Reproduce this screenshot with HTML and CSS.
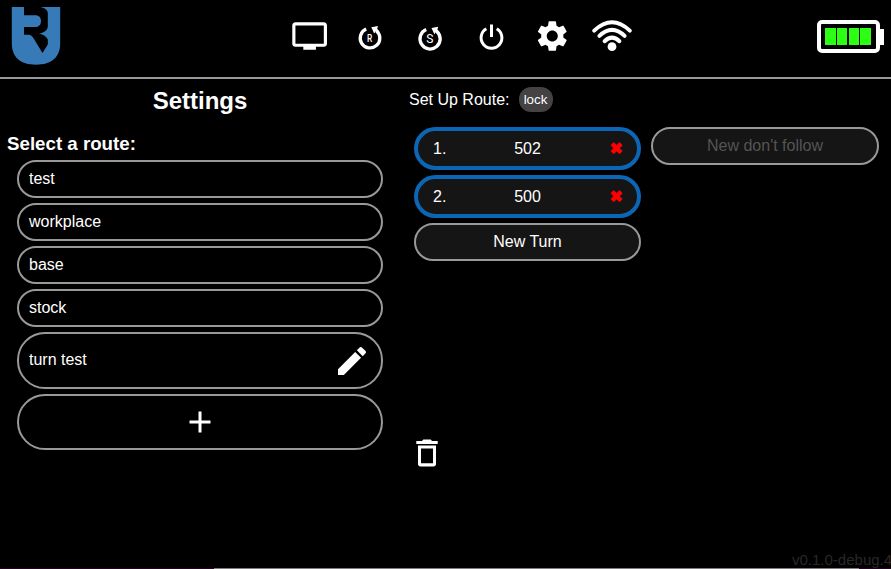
FILE: index.html
```html
<!DOCTYPE html>
<html lang="en">
<head>
<meta charset="utf-8">
<title>Settings</title>
<link rel="stylesheet" href="styles.css">
</head>
<body>
<header class="topbar">
  <svg class="logo" viewBox="0 0 50 58" width="50" height="58">
    <path fill="#367ab8" d="M.8 0H13V8.200H24.500C28 8.200 30 10.500 30 14S28 20 24.500 20H13V27.700H17.500C20 27.700 21.500 29.500 23 32L31.500 46L36.800 37.500V32.500C35.500 30 32.500 27.500 28 26.600C32.500 26 36.800 23 36.800 19.500V6C36.800 3 33 .5 29 0H49.200V36C49.200 50 41 57.700 25 57.700S.8 50 .8 36Z"/>
  </svg>
  <nav class="icons">
    <svg viewBox="0 0 60 77"><g transform="translate(10.700 17.800) scale(1.577 1.520)"><path d="M21 3H3c-1.100 0-2 .9-2 2v12c0 1.100.9 2 2 2h5v2h8v-2h5c1.100 0 2-.9 2-2V5c0-1.100-.9-2-2-2zm0 14H3V5h18v12z"/></g></svg>
    <svg viewBox="0 0 60 77"><path class="ring" d="M26.200 29.100A9.800 9.800 0 1 0 36.400 30.700"/><path d="M31.300 27.300L38 26L37.200 28.700L39.300 31.500L37 33L35.800 31.300L34.200 33.600Z"/><text class="letter" transform="translate(29.700 42) scale(.8 1)">R</text></svg>
    <svg viewBox="0 0 60 77"><path class="ring" d="M26.200 29.600A10.100 10.100 0 1 0 36.600 31.200"/><path d="M31.500 28L38.200 26.700L37.400 29.400L39.500 32.200L37.200 33.700L36 32L34.400 34.300Z"/><text class="letter letter-s" x="29.800" y="43.200">S</text></svg>
    <svg viewBox="0 0 60 77"><path class="power" d="M26.300 28.800A10.400 10.400 0 1 0 36.700 28.800M31.500 24.500V37"/></svg>
    <svg viewBox="0 0 60 77"><g transform="translate(13.800 17.500) scale(1.540)"><path d="M19.140 12.940c.04-.3.060-.61.060-.94 0-.32-.02-.64-.07-.94l2.030-1.580c.18-.14.230-.41.120-.61l-1.920-3.320c-.12-.22-.37-.29-.59-.22l-2.390.96c-.5-.38-1.030-.7-1.620-.94l-.36-2.540c-.04-.24-.24-.41-.48-.41h-3.840c-.24 0-.43.170-.47.410l-.36 2.540c-.59.240-1.130.570-1.620.940l-2.390-.96c-.22-.08-.47 0-.59.220L2.740 8.870c-.12.210-.08.470.12.610l2.030 1.580c-.05.3-.09.630-.09.940s.02.640.07.940l-2.030 1.580c-.18.140-.23.410-.12.610l1.920 3.320c.12.220.37.290.59.220l2.390-.96c.5.380 1.030.7 1.620.94l.36 2.540c.05.240.24.410.48.410h3.840c.24 0 .44-.17.470-.41l.36-2.540c.59-.24 1.130-.56 1.620-.94l2.390.96c.22.080.47 0 .59-.22l1.920-3.320c.12-.22.070-.47-.12-.61l-2.010-1.580zM12 15.600c-1.980 0-3.600-1.620-3.600-3.600s1.620-3.600 3.600-3.600 3.600 1.620 3.600 3.600-1.620 3.600-3.600 3.600z"/></g></svg>
    <svg viewBox="0 0 60 77"><path class="wave" d="M14.200 30.600Q32 13.900 49.800 30.600M19.400 35.900Q32 23.800 44.600 35.900M24.600 41.200Q32 34.200 39.400 41.200"/><circle cx="32" cy="46.700" r="4.400"/></svg>
  </nav>
  <div class="battery">
    <div class="cells"><i></i><i></i><i></i><i></i></div>
    <div class="terminal"></div>
  </div>
</header>
<main class="content">
  <section class="routes">
    <h1>Settings</h1>
    <h2>Select a route:</h2>
    <ul class="route-list">
      <li class="pill">test</li>
      <li class="pill">workplace</li>
      <li class="pill">base</li>
      <li class="pill">stock</li>
      <li class="pill selected"><span>turn test</span>
        <svg viewBox="3 3 18 18" width="28" height="28"><path d="M3 17.250V21h3.750L17.810 9.940l-3.750-3.750L3 17.250zM20.710 7.040c.39-.39.390-1.020 0-1.410l-2.340-2.340c-.39-.39-1.020-.39-1.410 0l-1.830 1.830 3.750 3.750 1.830-1.830z"/></svg>
      </li>
      <li class="pill add"><svg viewBox="0 0 22 22" width="22" height="22"><path d="M9.500 .5h3v9h9v3h-9v9h-3v-9h-9v-3h9z"/></svg></li>
    </ul>
  </section>
  <section class="setup">
    <div class="setup-head">Set Up Route: <span class="lock">lock</span></div>
    <div class="columns">
      <div class="turns">
        <div class="turn"><span>1.</span><span class="code">502</span><span class="remove">✖</span></div>
        <div class="turn"><span>2.</span><span class="code">500</span><span class="remove">✖</span></div>
        <div class="new">New Turn</div>
      </div>
      <div class="new disabled">New don't follow</div>
    </div>
    <svg class="trash" viewBox="0 0 22 28" width="22" height="28"><path fill-rule="evenodd" d="M.3 2H6L7.300 .5H14.700L16 2H21.700V5H.3ZM2 6.500H20V25C20 26.600 19 27.500 17.500 27.500H4.500C3 27.500 2 26.600 2 25ZM5 9.500V24.300H17V9.500Z"/></svg>
  </section>
</main>
<footer class="footer">
  <div class="version">v0.1.0-debug.4</div>
  <div class="edge"></div>
</footer>
</body>
</html>
```
FILE: styles.css
```css
* {
  box-sizing: border-box;
}

body {
  margin: 0;
  height: 569px;
  overflow: hidden;
  display: flex;
  flex-direction: column;
  background: #000;
  color: #fff;
  font: 16px/18px "Liberation Sans", Arial, sans-serif;
}

svg {
  display: block;
  fill: #fff;
}

.topbar {
  height: 79px;
  flex: none;
  display: flex;
  align-items: flex-start;
  border-bottom: 2px solid #999;
}

.logo {
  margin: 7px 0 0 11px;
}

.icons {
  display: flex;
  margin-left: 219px;
}

.icons svg {
  width: 60px;
  height: 77px;
}

.ring,
.power,
.wave {
  fill: none;
  stroke: #fff;
  stroke-width: 3;
}

.ring {
  stroke-width: 3.300;
}

.wave {
  stroke-width: 4;
  stroke-linecap: round;
}

.letter {
  font: 500 10.500px Roboto, sans-serif;
  text-anchor: middle;
}

.letter-s {
  font: 12px Roboto, sans-serif;
}

.battery {
  display: flex;
  align-items: center;
  margin: 20px 0 0 177px;
}

.cells {
  display: flex;
  gap: 1.300px;
  width: 63px;
  height: 33px;
  padding: 4px 5.200px 4px 4.300px;
  border: 4px solid #fff;
  border-radius: 5px;
}

.cells i {
  flex: 1;
  background: #2cff14;
}

.terminal {
  width: 4px;
  height: 16px;
  background: #fff;
}

.content {
  flex: 1;
  display: flex;
}

.routes {
  width: 400px;
  padding: 8px 17px 0;
}

h1 {
  margin: 0;
  font-size: 24px;
  line-height: 28px;
  text-align: center;
}

h2 {
  margin: 18px 0 6px -10px;
  font-size: 18.720px;
  line-height: 21px;
}

.route-list {
  margin: 0;
  padding: 0;
  list-style: none;
  display: flex;
  flex-direction: column;
  gap: 5px;
}

.pill {
  display: flex;
  align-items: center;
  height: 38px;
  padding: 0 10px 1px;
  border: 2px solid #999;
  border-radius: 28px;
}

.selected {
  height: 57px;
  justify-content: space-between;
  padding-right: 14.600px;
}

.selected span {
  margin-bottom: 1px;
}

.selected svg {
  margin-top: 1px;
}

.add {
  height: 56px;
  justify-content: center;
  padding-bottom: 0;
}

.setup {
  padding: 8px 0 0 9px;
}

.setup-head {
  display: flex;
  align-items: center;
  height: 25px;
}

.lock {
  margin-left: 9px;
  width: 34px;
  height: 25px;
  border-radius: 12px;
  background: #444243;
  font-size: 13.333px;
  line-height: 25px;
  text-align: center;
}

.columns {
  display: flex;
  align-items: flex-start;
  gap: 10px;
  margin: 15px 0 0 5px;
}

.turns {
  display: flex;
  flex-direction: column;
  gap: 5px;
  width: 227px;
}

.turn {
  display: grid;
  grid-template-columns: 30px 1fr 30px;
  align-items: center;
  height: 43px;
  padding: 0 15px;
  border: 4px solid #0b67b6;
  border-radius: 21.500px;
  background: #151515;
}

.code {
  text-align: center;
}

.remove {
  margin-right: -1px;
  color: #f00;
  text-align: right;
  font-family: "DejaVu Sans", sans-serif;
  -webkit-text-stroke: 0.800px #f00;
}

.new {
  height: 38px;
  border: 2px solid #999;
  border-radius: 19px;
  background: #151515;
  line-height: 33px;
  text-align: center;
}

.disabled {
  width: 228px;
  color: #545454;
}

.trash {
  margin: 178px 0 0 7px;
}

.footer {
  flex: none;
}

.version {
  height: 17px;
  margin-left: 792px;
  color: #282828;
  font-size: 15px;
  line-height: 17px;
  white-space: nowrap;
}

.edge {
  height: 1px;
  background: linear-gradient(90deg, #210020 214px, #807b7f 214px 859px, #210020 859px);
}
```
